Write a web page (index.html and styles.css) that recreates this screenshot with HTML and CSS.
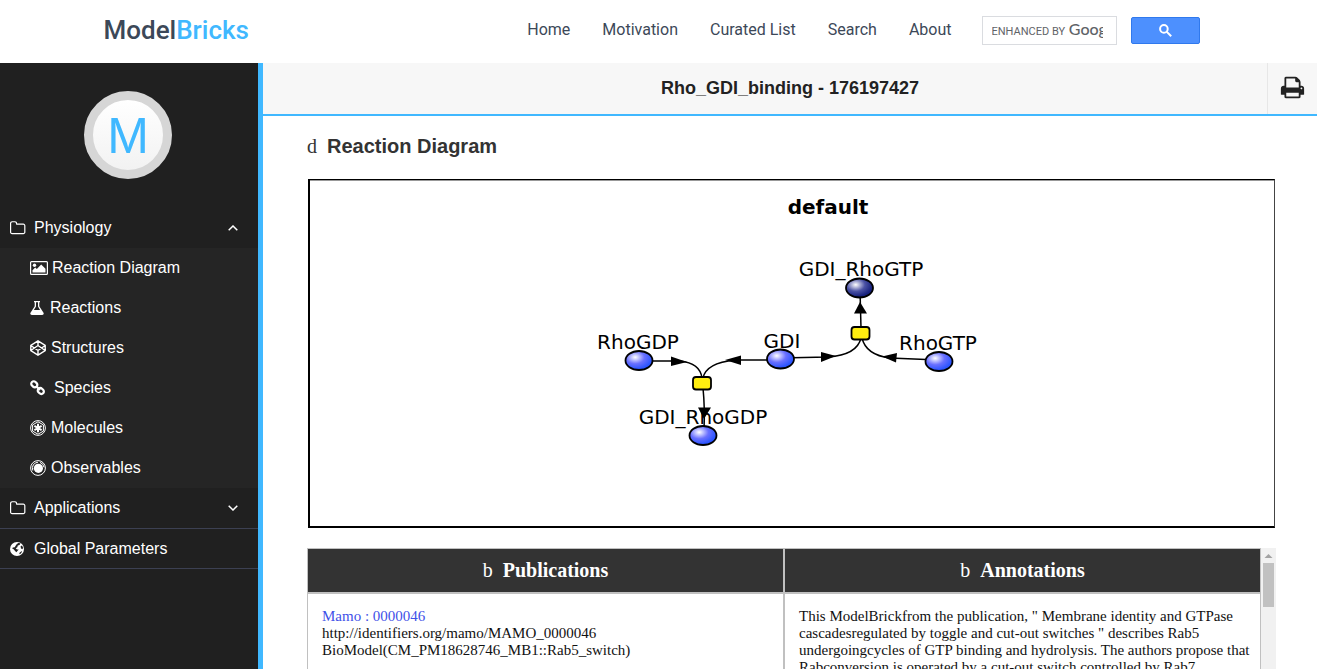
FILE: index.html
```html
<!DOCTYPE html>
<html lang="en">
<head>
<meta charset="utf-8">
<title>ModelBricks</title>
<link rel="stylesheet" href="styles.css">
</head>
<body>
<header class="site-header">
  <div class="header-inner">
    <a class="brand" href="#">Model<span class="brand-accent">Bricks</span></a>
    <nav class="site-nav">
      <a href="#">Home</a>
      <a href="#">Motivation</a>
      <a href="#">Curated List</a>
      <a href="#">Search</a>
      <a href="#">About</a>
    </nav>
    <form class="search">
      <label class="search-box">
        <span class="search-hint">ENHANCED BY <span class="search-logo">Google</span></span>
        <input class="search-input" type="text" aria-label="Search">
      </label>
      <button class="search-button" type="button" aria-label="Search">
        <svg width="13" height="13" viewBox="0 0 13 13" fill="none" stroke="#fff" stroke-width="2"><circle cx="4.900" cy="4.900" r="3.800"/><path d="m7.600 7.600 4.600 4.600"/></svg>
      </button>
    </form>
  </div>
</header>

<div class="layout">
  <aside class="sidebar">
    <div class="avatar">M</div>
    <nav class="menu">
      <a class="menu-item" href="#">
        <svg class="icon" viewBox="64 0 1728 1728"><path d="M1600 1312v-704q0-40-28-68t-68-28h-704q-40 0-68-28t-28-68v-64q0-40-28-68t-68-28h-320q-40 0-68 28t-28 68v960q0 40 28 68t68 28h1216q40 0 68-28t28-68zm128-704v704q0 92-66 158t-158 66h-1216q-92 0-158-66t-66-158v-960q0-92 66-158t158-66h320q92 0 158 66t66 158v32h672q92 0 158 66t66 158z"/></svg>
        <span>Physiology</span>
        <svg class="chevron" viewBox="0 0 10 6"><path d="M.7 5.300 5 1l4.300 4.300"/></svg>
      </a>
      <div class="submenu">
        <a class="menu-item" href="#">
          <svg class="icon icon-wide" viewBox="0 0 18 16"><path fill-rule="evenodd" d="M1.500 1h15Q18 1 18 2.500v11q0 1.500-1.500 1.500h-15Q0 15 0 13.500v-11Q0 1 1.500 1zm0 1.200q-.3 0-.3.300v11q0 .3.300.3h15q.3 0 .3-.3v-11q0-.3-.3-.3z"/><circle cx="4.500" cy="5.300" r="1.700"/><path d="M2.500 12.600v-2.400L5.200 7.600l1.600 1.500L11.200 4.500l4.300 4.200v3.900z"/></svg>
          <span>Reaction Diagram</span>
        </a>
        <a class="menu-item" href="#">
          <svg class="icon icon-narrow" viewBox="0 0 14 16"><path fill-rule="evenodd" d="M4 1h6v1.300H9.300V6.200l4.200 6.600Q14.300 15 12.200 15H1.800Q-.3 15 .5 12.800L4.700 6.200V2.300H4zm2 1.300v4.300L3.900 10h6.200L8 6.600V2.300z"/></svg>
          <span>Reactions</span>
        </a>
        <a class="menu-item" href="#">
          <svg class="icon" viewBox="0 0 16 16"><path class="stroke" d="M8 .9 15.200 5.500v5L8 15.100.8 10.500v-5zM8 1v4.300M8 10.700V15M.8 5.500 8 10.500l7.200-5M.8 10.500 8 5.500l7.200 5"/></svg>
          <span>Structures</span>
        </a>
        <a class="menu-item" href="#">
          <svg class="icon icon-gap" viewBox="0 0 16 16"><g fill="none" stroke="#fff" stroke-width="2.200"><rect x="-3.300" y="-2.500" width="6.600" height="5" rx="2.500" transform="translate(4.300 4.300) rotate(45)"/><rect x="-3.300" y="-2.500" width="6.600" height="5" rx="2.500" transform="translate(10.800 11) rotate(45)"/><path d="m6 6 4 4"/></g></svg>
          <span>Species</span>
        </a>
        <a class="menu-item" href="#">
          <svg class="icon" viewBox="0 0 16 16"><circle class="thin" cx="8" cy="8" r="7.400"/><path class="thin" d="M8 1.800 13.400 4.900v6.200L8 14.200l-5.400-3.100V4.900z"/><path class="bold" d="M8 3.800v8.400M4.400 5.900l7.200 4.200M4.400 10.100l7.200-4.200"/></svg>
          <span>Molecules</span>
        </a>
        <a class="menu-item" href="#">
          <svg class="icon" viewBox="0 0 16 16"><circle class="thin" cx="8" cy="8" r="7.400"/><circle cx="8.400" cy="8.300" r="4.600"/><path class="thin" d="M2.800 10.500A6 6 0 0 1 8 2.200M10 2.400a6 6 0 0 1 4 5"/></svg>
          <span>Observables</span>
        </a>
      </div>
      <a class="menu-item menu-item-ruled" href="#">
        <svg class="icon" viewBox="64 0 1728 1728"><path d="M1600 1312v-704q0-40-28-68t-68-28h-704q-40 0-68-28t-28-68v-64q0-40-28-68t-68-28h-320q-40 0-68 28t-28 68v960q0 40 28 68t68 28h1216q40 0 68-28t28-68zm128-704v704q0 92-66 158t-158 66h-1216q-92 0-158-66t-66-158v-960q0-92 66-158t158-66h320q92 0 158 66t66 158v32h672q92 0 158 66t66 158z"/></svg>
        <span>Applications</span>
        <svg class="chevron" viewBox="0 0 10 6"><path d="M.7.7 5 5 9.300.7"/></svg>
      </a>
      <a class="menu-item menu-item-ruled" href="#">
        <svg class="icon" viewBox="0 0 16 16"><circle cx="7" cy="8" r="7"/><path fill="#202020" d="M8.200 2 10.500 2.300 9.500 4 7.800 4.600 7.300 6.200 5.700 7.200 7 8.400 8.700 8.600 7.600 9.800 6.400 11.300 5.300 10.200 3.600 8.300 2 7.200 3 6.400 4.700 6.300 6.400 3.600zM10.600 5.300 12 4.400l1 2-.4 1.900-1.600-.7zM9.500 11.800l2-1.600.6.400-1.200 2-1.600.6z"/></svg>
        <span>Global Parameters</span>
      </a>
    </nav>
  </aside>

  <main class="content">
    <div class="title-bar">
      <h1 class="title">Rho_GDI_binding - 176197427</h1>
      <button class="print-button" type="button" aria-label="Print">
        <svg width="25" height="25" viewBox="0 0 1792 1792"><path fill="#222" d="M448 1536h896v-256h-896v256zm0-640h896v-384h-160q-40 0-68-28t-28-68v-160h-640v640zm1152 64q0-26-19-45t-45-19-45 19-19 45 19 45 45 19 45-19 19-45zm128 0v416q0 13-9.500 22.500t-22.500 9.500h-224v160q0 40-28 68t-68 28h-960q-40 0-68-28t-28-68v-160h-224q-13 0-22.500-9.500t-9.500-22.500v-416q0-79 56.500-135.500t135.500-56.500h64v-544q0-40 28-68t68-28h672q40 0 88 20t76 48l152 152q28 28 48 76t20 88v256h64q79 0 135.500 56.500t56.500 135.500z"/></svg>
      </button>
    </div>

    <div class="body">
      <h2 class="section-title"><span class="glyph">d</span>Reaction Diagram</h2>

      <div class="diagram">
        <svg class="diagram-art" viewBox="310 180 964 346" role="img" aria-label="Reaction diagram">
          <defs>
            <radialGradient id="blue" cx=".36" cy=".33" r=".62"><stop offset="0" stop-color="#fff"/><stop offset=".55" stop-color="#6a70ff"/><stop offset="1" stop-color="#2c55ff"/></radialGradient>
            <radialGradient id="navy" cx=".36" cy=".33" r=".62"><stop offset="0" stop-color="#fff"/><stop offset=".55" stop-color="#4b52a4"/><stop offset="1" stop-color="#16207c"/></radialGradient>
          </defs>
          <g class="edges">
            <path d="M639 361 680 361Q700 363 702 378"/>
            <path d="M780 360 735 360Q706 363 703 378"/>
            <path d="M703 388Q705 408 704 430"/>
            <path d="M780 358 828 357Q857 355 861 338"/>
            <path d="M938 360 890 358Q866 355 862 338"/>
            <path d="M861 328 860 290"/>
          </g>
          <g class="arrows">
            <path d="M671 356.500 687 362 671 366z"/>
            <path d="M741 355.500 725 360 741 365z"/>
            <path d="M698 407.500H711L704 419z"/>
            <path d="M821 352 836 356 821 362z"/>
            <path d="M882 356.500 897 353 896 362.500z"/>
            <path d="M854 313.500 860 302 867 313.500z"/>
          </g>
          <g class="nodes">
            <ellipse cx="639" cy="360.500" rx="13.500" ry="9.500" fill="url(#blue)"/>
            <ellipse cx="780.500" cy="359" rx="13.500" ry="9.500" fill="url(#blue)"/>
            <ellipse cx="703" cy="435.500" rx="13.500" ry="9.500" fill="url(#blue)"/>
            <ellipse cx="859.500" cy="288" rx="13.500" ry="9.500" fill="url(#navy)"/>
            <ellipse cx="939" cy="361.500" rx="13.500" ry="9.500" fill="url(#blue)"/>
            <rect x="693" y="377" width="18" height="12.500" rx="3" fill="#ffee10"/>
            <rect x="851.500" y="327" width="18" height="12.500" rx="3" fill="#ffee10"/>
          </g>
          <g class="labels">
            <text class="diagram-title" x="828" y="214">default</text>
            <text x="861" y="276">GDI_RhoGTP</text>
            <text x="638" y="349">RhoGDP</text>
            <text x="782" y="348">GDI</text>
            <text x="938" y="350">RhoGTP</text>
            <text x="703" y="424">GDI_RhoGDP</text>
          </g>
        </svg>
      </div>

      <div class="table-frame">
        <div class="table-scroll">
          <table class="info-table">
            <thead>
              <tr>
                <th scope="col"><span class="glyph">b</span>Publications</th>
                <th scope="col"><span class="glyph">b</span>Annotations</th>
              </tr>
            </thead>
            <tbody>
              <tr>
                <td><a href="#">Mamo : 0000046</a><br>http://identifiers.org/mamo/MAMO_0000046<br>BioModel(CM_PM18628746_MB1::Rab5_switch)</td>
                <td>This ModelBrickfrom the publication, " Membrane identity and GTPase cascadesregulated by toggle and cut-out switches " describes Rab5 undergoingcycles of GTP binding and hydrolysis. The authors propose that Rabconversion is operated by a cut-out switch controlled by Rab7</td>
              </tr>
            </tbody>
          </table>
        </div>
        <div class="scrollbar" aria-hidden="true">
          <svg width="15" height="15" viewBox="0 0 15 15"><path fill="#a3a3a3" d="M3.500 10 7.500 6l4 4z"/></svg>
          <div class="scrollbar-thumb"></div>
        </div>
      </div>
    </div>
  </main>
</div>
</body>
</html>
```
FILE: styles.css
```css
* { box-sizing: border-box; }

body {
  margin: 0;
  height: 100vh;
  display: flex;
  flex-direction: column;
  overflow: hidden;
  background: #fff;
  font-family: "Liberation Sans", Arial, sans-serif;
  font-size: 16px;
}

a { text-decoration: none; }

/* Header */
.site-header {
  flex: none;
  padding: 16px 0 18px;
  font-family: Roboto, sans-serif;
}
.header-inner {
  display: flex;
  align-items: center;
  max-width: 1110px;
  height: 29px;
  margin: 0 auto;
  padding-right: 14px;
}
.brand {
  margin-right: auto;
  padding-bottom: 2px;
  color: #3c4858;
  font-size: 26px;
  font-weight: 500;
}
.brand-accent { color: #40b8ff; }
.site-nav {
  display: flex;
  gap: 32px;
  margin-right: 30px;
  padding-bottom: 2px;
}
.site-nav a { color: #3c4858; line-height: 24px; }
.search { display: flex; align-items: center; gap: 14px; }
.search-box {
  display: flex;
  position: relative;
  width: 135px;
  height: 29px;
  padding: 0 13px 0 9px;
  border: 1px solid #dadce0;
}
.search-hint {
  overflow: hidden;
  color: #5f6368;
  font-size: 11px;
  line-height: 24px;
  white-space: nowrap;
}
.search-logo {
  margin-left: 1px;
  font-family: Lato, sans-serif;
  font-size: 16px;
  font-weight: 500;
}
.search-input {
  position: absolute;
  inset: 0;
  width: 100%;
  border: 0;
  padding: 0 9px;
  background: transparent;
}
.search-button {
  display: flex;
  align-items: center;
  justify-content: center;
  width: 69px;
  height: 27px;
  padding: 0;
  border: 1px solid #3079ed;
  border-radius: 2px;
  background: #4d90fe;
}

/* Sidebar */
.layout { display: flex; flex: 1; min-height: 0; }
.sidebar {
  flex: none;
  width: 263px;
  padding-top: 28px;
  border-right: 5px solid #40b8ff;
  background: #202020;
}
.avatar {
  width: 88px;
  height: 88px;
  margin: 0 auto 29px 84px;
  border: 9px solid #d6d6d6;
  border-radius: 50%;
  background: linear-gradient(#fff, #f2f2f2);
  color: #40b8ff;
  font-size: 50px;
  line-height: 72px;
  text-align: center;
}
.menu-item {
  display: flex;
  align-items: center;
  height: 40px;
  padding: 0 20px 0 10px;
  color: #fff;
}
.menu-item-ruled { height: 41px; border-bottom: 1px solid #3c4052; }
.menu-item-ruled + .menu-item-ruled { height: 40px; }
.icon {
  flex: none;
  width: 16px;
  height: 16px;
  margin-right: 8px;
  fill: #fff;
}
.submenu { background: #252525; }
.submenu .menu-item { padding-left: 30px; }
.submenu .icon { margin-right: 5px; }
.submenu .icon-wide { width: 18px; margin-right: 4px; }
.submenu .icon-narrow { width: 14px; margin-right: 6px; }
.submenu .icon-gap { margin-right: 8px; }
.stroke { fill: none; stroke: #fff; stroke-width: 1.400; }
.thin { fill: none; stroke: #fff; stroke-width: 1; }
.bold { fill: none; stroke: #fff; stroke-width: 2; }
.chevron {
  width: 10px;
  height: 6px;
  margin-left: auto;
  fill: none;
  stroke: #fff;
  stroke-width: 1.500;
}

/* Content */
.content { flex: 1; min-width: 0; overflow: hidden; }
.title-bar {
  display: flex;
  height: 53px;
  border-bottom: 2px solid #40b8ff;
  background: #f7f7f7;
}
.title {
  flex: 1;
  margin: 0 0 0 50px;
  color: #222;
  font-size: 18px;
  line-height: 50px;
  text-align: center;
}
.print-button {
  display: flex;
  align-items: center;
  justify-content: center;
  width: 50px;
  padding: 0 0 2px;
  border: 0;
  border-left: 1px solid #e7e7e7;
  background: transparent;
}
.body { padding: 18px 41px 0 44px; }
.glyph {
  margin-right: 10px;
  font-family: "Liberation Serif", serif;
  font-weight: 400;
}
.section-title {
  margin: 0 0 21px;
  color: #333;
  font-size: 20px;
  line-height: 24px;
}
.diagram {
  margin: 0 1px 20px;
  border: solid #000;
  border-width: 1px 1px 2px 2px;
  border-right-color: #444;
  box-shadow: inset 0 1px #999;
}
.diagram-art { display: block; width: 100%; }
.edges { fill: none; stroke: #000; stroke-width: 1.500; }
.nodes { stroke: #000; stroke-width: 1.800; }
.labels {
  font-family: "DejaVu Sans", sans-serif;
  font-size: 20px;
  text-anchor: middle;
}
.diagram-title { font-weight: 700; }

/* Publications and annotations */
.table-frame { display: flex; height: 300px; }
.table-scroll {
  flex: 1;
  overflow-y: auto;
  scrollbar-width: none;
}
.scrollbar {
  flex: none;
  width: 15px;
  background: #f1f1f1;
}
.scrollbar svg { display: block; }
.scrollbar-thumb {
  height: 44px;
  margin: 0 2px;
  background: #c1c1c1;
}
.info-table {
  width: 100%;
  table-layout: fixed;
  border-collapse: separate;
  border-spacing: 0;
  font-family: "Liberation Serif", serif;
}
.info-table th {
  height: 45px;
  padding: 0;
  border: 1px solid #c0c0c0;
  background: #333;
  color: #fff;
  font-size: 20px;
}
.info-table td {
  height: 255px;
  padding: 14px 8px 14px 14px;
  border: 1px solid #c0c0c0;
  color: #111;
  font-size: 15px;
  line-height: 17px;
  vertical-align: top;
}
.info-table a { color: #3f51e8; }
```
